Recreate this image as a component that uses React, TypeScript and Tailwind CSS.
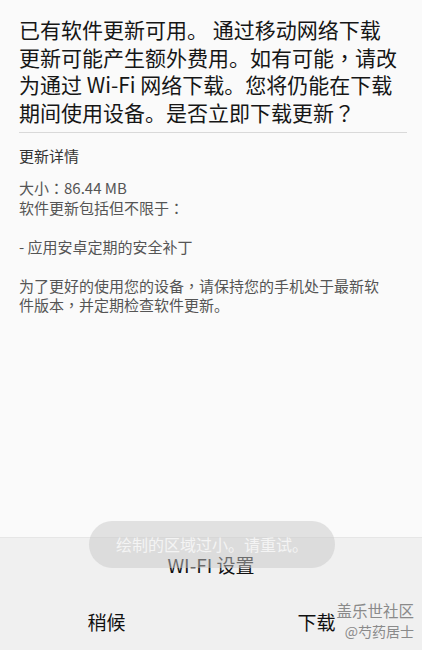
import React from "react";

const FONT = { fontFamily: '"Noto Sans CJK SC", "Noto Sans", sans-serif' };

// the device font centres these marks in their cell, as the TC face does
function P({ c }: { c: string }) {
  return <span style={{ fontFamily: '"Noto Sans CJK TC", sans-serif' }}>{c}</span>;
}

function Details() {
  return (
    <div className="text-[15px] leading-[19.5px] text-[#555]">
      <p>
        大小<P c="：" />86.44 MB
      </p>
      <p>
        软件更新包括但不限于<P c="：" />
      </p>
      <p>&nbsp;</p>
      <p>- 应用安卓定期的安全补丁</p>
      <p>&nbsp;</p>
      <p>
        为了更好的使用您的设备<P c="，" />请保持您的手机处于最新软
      </p>
      <p>
        件版本<P c="，" />并定期检查软件更新。
      </p>
    </div>
  );
}

export default function App() {
  return (
    <div className="relative w-[422px] h-[650px] flex flex-col bg-[#fafafa] overflow-hidden" style={FONT}>
      <div className="flex-1 pl-[19px] pr-[15px]">
        <p className="pt-[16px] text-[21px] leading-[27.5px] text-[#161616] whitespace-nowrap">
          已有软件更新可用。 通过移动网络下载
          <br />
          更新可能产生额外费用。如有可能<P c="，" />请改
          <br />
          为通过 Wi-Fi 网络下载。您将仍能在下载
          <br />
          期间使用设备。是否立即下载更新<P c="？" />
        </p>
        <div className="mt-[6px] h-px bg-[#d9d9d9]" />
        <p className="mt-[13px] text-[15px] leading-[20px] text-[#333]">更新详情</p>
        <div className="mt-[12px]">
          <Details />
        </div>
      </div>

      <div className="h-[113px] bg-[#f0f0f0] border-t border-[#e6e6e6] flex flex-col">
        <p className="pt-[15px] text-center text-[19px] leading-[24px] text-[#111]">WI-FI 设置</p>
        <div className="mt-[33px] grid grid-cols-2 text-[19px] leading-[24px] text-[#111]">
          <span className="text-center pl-[2px]">稍候</span>
          <span className="text-center">下载</span>
        </div>
      </div>

      <div className="absolute left-[89px] top-[521px] w-[246px] h-[47px] rounded-full bg-[#c8c8c8]/50 flex items-center justify-center">
        <span className="text-[16px] text-[#f4f4f4] -mt-[1px]">绘制的区域过小。请重试。</span>
      </div>

      <div className="absolute right-[8px] top-[600px] flex flex-col items-end text-[#8a8a8a]">
        <span className="text-[15.5px] leading-[20px]">盖乐世社区</span>
        <span className="text-[14px] leading-[18px] mt-[2px]">@芍药居士</span>
      </div>
    </div>
  );
}
